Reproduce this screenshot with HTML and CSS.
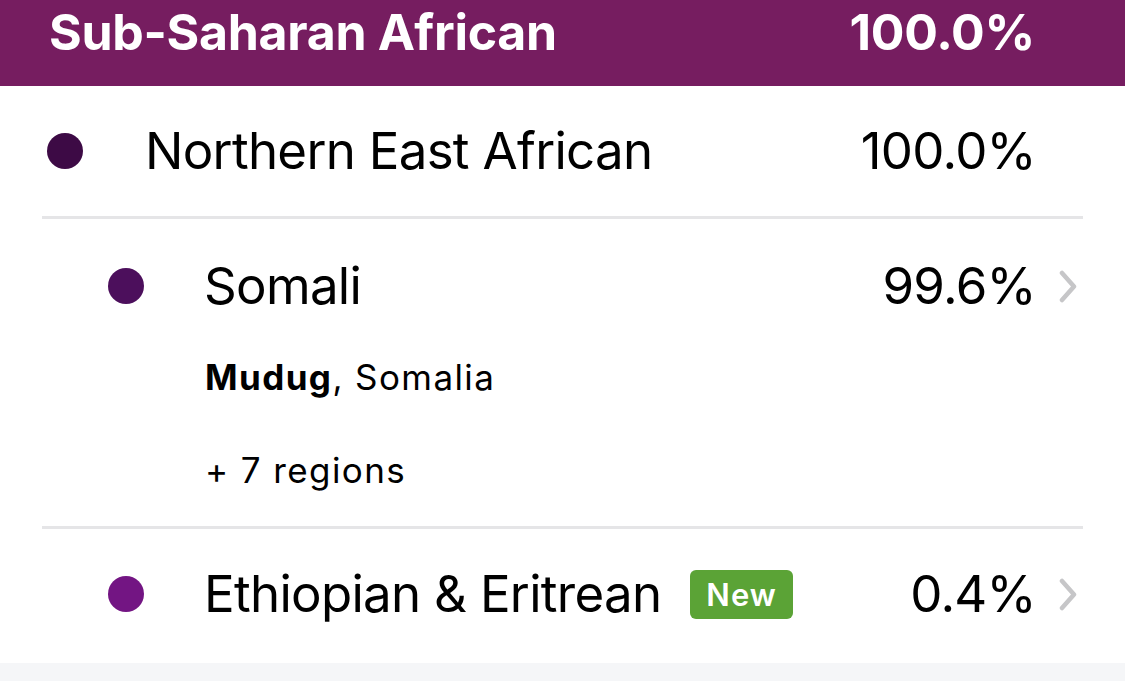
FILE: index.html
```html
<!DOCTYPE html>
<html lang="en">
<head>
    <meta charset="UTF-8">
    <meta name="viewport" content="width=device-width, initial-scale=1.0">
    <title>Ancestry Composition</title>
    <link rel="stylesheet" href="styles.css">
</head>
<body>
    <div class="region-header">
        <span class="region-name">Sub-Saharan African</span>
        <span class="region-pct">100.0%</span>
    </div>

    <div class="breakdown">
        <!-- level 1 -->
        <div class="row level-1">
            <div class="row-main">
                <span class="dot dot-nea"></span>
                <span class="name">Northern East African</span>
                <span class="pct">100.0%</span>
                <span class="chev-slot"></span>
            </div>
        </div>

        <!-- level 2 -->
        <div class="row level-2 has-detail">
            <div class="row-main">
                <span class="dot dot-somali"></span>
                <span class="name">Somali</span>
                <span class="pct">99.6%</span>
                <span class="chev-slot">
                    <svg class="chevron" width="18" height="33" viewBox="0 0 18 33">
                        <path d="M3 3 L15 16.5 L3 30" fill="none" stroke="#c6c6c8" stroke-width="4.5" stroke-linecap="round" stroke-linejoin="round"/>
                    </svg>
                </span>
            </div>
            <div class="detail top-region"><b>Mudug</b>, Somalia</div>
            <div class="detail more">+ 7 regions</div>
        </div>

        <div class="row level-2 last">
            <div class="row-main">
                <span class="dot dot-eth"></span>
                <span class="name">Ethiopian &amp; Eritrean <span class="badge">New</span></span>
                <span class="pct">0.4%</span>
                <span class="chev-slot">
                    <svg class="chevron" width="18" height="33" viewBox="0 0 18 33">
                        <path d="M3 3 L15 16.5 L3 30" fill="none" stroke="#c6c6c8" stroke-width="4.5" stroke-linecap="round" stroke-linejoin="round"/>
                    </svg>
                </span>
            </div>
        </div>
    </div>

    <div class="footer-band"></div>
</body>
</html>
```

FILE: styles.css
```css
/* Ancestry breakdown */
body {
    margin: 0;
    padding: 0;
    font-family: Inter, "Noto Sans", sans-serif;
    color: #000;
    background-color: #fff;
}

.region-header {
    display: flex;
    justify-content: space-between;
    align-items: center;
    height: 86px;
    padding: 0 90px 0 49px;
    box-sizing: border-box;
    background-color: #761d60;
    color: #fff;
    font-weight: 700;
    font-size: 50px;
    line-height: 64px;
    letter-spacing: -0.3px;
}

.region-header span {
    margin-top: -22px;
}

.breakdown {
    padding: 0 42px;
}

.row {
    border-bottom: 3px solid #e5e5e7;
}

.row.last {
    border-bottom: none;
    height: 134px;
}

.row-main {
    display: flex;
    align-items: center;
    height: 130px;
    font-size: 51px;
    line-height: 60px;
    letter-spacing: -0.7px;
}

.level-1 .row-main {
    padding-left: 5px;
}

.level-2 .row-main {
    padding-left: 66px;
}

.level-2.has-detail .row-main {
    height: 134px;
}

.dot {
    width: 36px;
    height: 36px;
    border-radius: 50%;
    flex-shrink: 0;
}

.level-1 .dot {
    margin-right: 62px;
}

.level-2 .dot {
    margin-right: 60px;
}

.dot-nea { background-color: #3d0a45; }
.dot-somali { background-color: #4c0f5c; }
.dot-eth { background-color: #731583; }

.name {
    flex: 1;
    display: flex;
    align-items: center;
}

.pct {
    text-align: right;
}

.chev-slot {
    width: 47px;
    flex-shrink: 0;
    display: flex;
    justify-content: flex-start;
    padding-left: 23px;
    box-sizing: border-box;
}

.chevron {
    display: block;
}

.detail {
    padding-left: 163px;
    font-size: 35px;
    line-height: 40px;
    letter-spacing: 1.4px;
}

.detail b {
    font-weight: 700;
}

.detail.top-region {
    margin-top: 4px;
}

.detail.more {
    margin-top: 53px;
    padding-bottom: 36px;
}

.badge {
    display: inline-block;
    margin-left: 29px;
    padding: 0 16px;
    height: 49px;
    line-height: 49px;
    border-radius: 6px;
    background-color: #5ba336;
    color: #fff;
    font-size: 31px;
    font-weight: 600;
    letter-spacing: 1px;
}

.footer-band {
    height: 40px;
    background-color: #f5f6f8;
}
```
